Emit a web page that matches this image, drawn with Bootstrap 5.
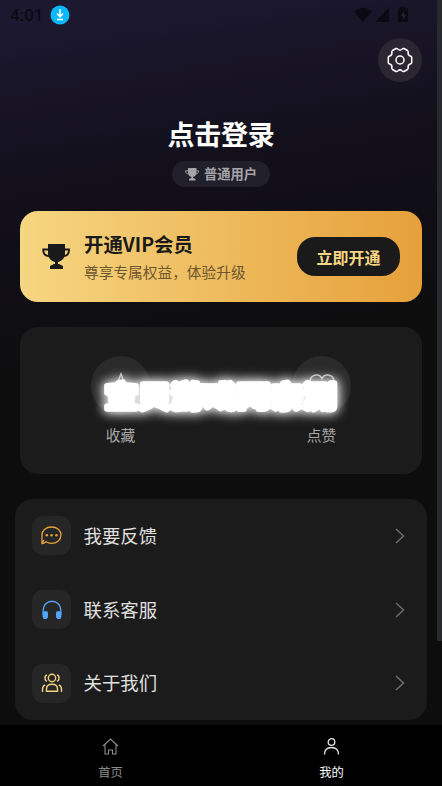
<!DOCTYPE html>
<html lang="zh-CN">
<head>
<meta charset="utf-8">
<meta name="viewport" content="width=device-width, initial-scale=1">
<title>我的</title>
<link href="https://cdn.jsdelivr.net/npm/bootstrap@5.3.0/dist/css/bootstrap.min.css" rel="stylesheet">
<style>
body{font-family:"Noto Sans CJK SC",sans-serif;background:#0d0d0d;overflow:hidden}
.screen{width:442px;height:786px;background:linear-gradient(171deg,#1c182f 3%,#120f1a 24%,#0d0d0d 46%)}
svg{display:block;flex:none}
.status{height:30px;padding:0 33px 0 10px;color:#0b0a12}
.clock{font:500 17px/31px Roboto,sans-serif;width:40px}
.settings{width:44px;height:44px;background:#2a2732;margin:8px 20px 0 auto}
.login{font-size:27px;line-height:40px;margin-top:32px;letter-spacing:-.2px}
.level{width:98px;height:26px;background:#211f29;color:#a5a4a9;font-size:13.3px;font-weight:700;margin-top:7px;gap:5px}
.vip{height:91px;margin:24px 20px 0;border-radius:18px;background:linear-gradient(90deg,#f6d681,#e6a03a);color:#1a1a1a;padding:0 22px}
.vip-text{margin-left:14px}
.vip-title{font-size:19.4px;line-height:28px;margin-top:1px}
.vip-sub{font-size:14.7px;line-height:24px;color:#6c562e;margin-top:2px}
.vip-btn,.vip-btn:hover{width:103px;height:39px;border-radius:18px;background:#1a1a1a;color:#f6d682;font-size:16px;font-weight:700;padding:0;line-height:41px;border:0}
.panel{background:#1b1b1b;border-radius:18px}
.stats{height:147px;margin:25px 20px 0;padding-top:29px}
.stat-icon{width:59px;height:59px;background:#2a2a2a}
.stat-label{font-size:14.7px;line-height:22px;color:#a8a8a8;margin-top:9px}
.menu{height:221px;margin:25px 15px 0}
.menu-row{padding:0 22px 0 17px;color:#e0e0e0;font-size:18.4px}
.tile{width:39px;height:39px;border-radius:11px;background:#262626;margin-right:12.5px}
.tabs{height:61px;background:#000;margin-top:5px;font-size:12.3px;line-height:18px;color:#8b8b8b}
.thumb{width:5px;height:641px;right:0;top:0;background:#26292d}
.stamp{left:74px;top:346px;filter:drop-shadow(0 0 6px #fffc) drop-shadow(0 0 4px #fff9)}
.stamp text{font-size:28px;font-weight:700;fill:#fff;stroke:#fff;stroke-width:5.500px;stroke-linejoin:round}
</style>
<script src="https://cdn.jsdelivr.net/npm/bootstrap@5.3.0/dist/js/bootstrap.bundle.min.js"></script>
</head>
<body>
<svg width="0" height="0" class="position-absolute"><defs>
<symbol id="cup" viewBox="0 0 28 26"><path fill="currentColor" d="M6 0h17v9c0 5-3 8-7 9v2h1l4 2v3H8v-3l4-2h1v-2c-4-1-7-4-7-9z"/><path d="M6 5.500H1.200c0 4 2 6.500 6 6.500M23 5.500h4c0 4-2 6.500-5.500 6.500" fill="none" stroke="currentColor" stroke-width="1.800"/></symbol>
<symbol id="chev" viewBox="0 0 10 16"><path d="M1 1l7.500 7L1 15" fill="none" stroke="#6d6d6d" stroke-width="1.500"/></symbol>
</defs></svg>
<div class="screen position-relative overflow-hidden d-flex flex-column">
  <div class="status d-flex align-items-center">
    <span class="clock">4:01</span>
    <svg width="20" height="20" viewBox="0 0 20 20"><circle cx="10" cy="10" r="9.500" fill="#08b8fb"/><path d="M10 4v8M7 8.500l3 3.300 3-3.300M7 14.500h6" fill="none" stroke="#fff" stroke-width="1.500"/></svg>
    <svg class="ms-auto" width="55" height="18" viewBox="0 0 55 18" fill="currentColor"><path d="M0 5.500Q9-2 18 5.500L9 16zM35 1.500V16H21z"/><path d="M44 2.500h2V.8h5v1.700h3V16H44z"/><path d="M50 5l-3 5h2v4l3-5h-2z" fill="#292536"/></svg>
  </div>
  <div class="settings rounded-circle d-flex align-items-center justify-content-center flex-shrink-0">
    <svg width="26" height="26" viewBox="-13 -13 26 26" fill="none" stroke="#fff" stroke-width="1.500" stroke-linejoin="round"><circle r="4"/><path d="M-4-11.500Q-2.500-11.700-2-10.800Q0-9 2-10.800Q2.500-11.700 4-11.500L7.500-9.500Q8.600-8.700 8.100-7.500Q7.700-4.700 10.400-4Q11.500-3.500 11.700-2.500V2.500Q11.500 3.500 10.400 4Q7.700 4.700 8.100 7.500Q8.600 8.700 7.500 9.500L4 11.500Q2.500 11.700 2 10.800Q0 9-2 10.800Q-2.500 11.700-4 11.500L-7.500 9.500Q-8.600 8.700-8.100 7.500Q-7.700 4.700-10.400 4Q-11.500 3.500-11.700 2.500V-2.500Q-11.500-3.500-10.400-4Q-7.700-4.700-8.100-7.500Q-8.600-8.700-7.500-9.500Z"/></svg>
  </div>
  <div class="login text-white fw-bold text-center">点击登录</div>
  <div class="level rounded-pill mx-auto d-flex align-items-center justify-content-center flex-shrink-0">
    <svg width="14" height="13"><use href="#cup"/></svg><span>普通用户</span>
  </div>
  <section class="vip d-flex align-items-center flex-shrink-0">
    <svg width="28" height="26"><use href="#cup"/></svg>
    <div class="vip-text me-auto">
      <div class="vip-title fw-bold">开通VIP会员</div>
      <div class="vip-sub">尊享专属权益，体验升级</div>
    </div>
    <button class="btn vip-btn">立即开通</button>
  </section>
  <section class="panel stats d-flex flex-shrink-0 text-center">
    <div class="col-6">
      <div class="stat-icon rounded-circle mx-auto d-flex align-items-center justify-content-center"><svg width="28" height="28" viewBox="0 0 28 28" fill="none" stroke="#b5b5b5" stroke-width="1.500"><path d="M14 2l3.300 8.600 8.200.8-6.200 5.400 1.800 8L14 20.600l-7.100 4.200 1.800-8L2.500 11.400l8.200-.8z"/></svg></div>
      <div class="stat-label">收藏</div>
    </div>
    <div class="col-6">
      <div class="stat-icon rounded-circle mx-auto d-flex align-items-center justify-content-center"><svg width="28" height="28" viewBox="0 0 28 28" fill="none" stroke="#b5b5b5" stroke-width="1.500"><path d="M14 6.500C11 .5 2 2.500 2 10c0 6.500 7 11 12 15 5-4 12-8.500 12-15C26 2.500 17 .5 14 6.500z"/></svg></div>
      <div class="stat-label">点赞</div>
    </div>
  </section>
  <section class="panel menu d-flex flex-column flex-shrink-0">
    <div class="menu-row d-flex align-items-center flex-fill">
      <span class="tile d-flex align-items-center justify-content-center"><svg width="21" height="19" viewBox="0 0 21 19"><path d="M1 17.500V9C1 4.300 5 1 10.500 1S20 4.300 20 9s-4 8.300-9.500 8.300c-2.300 0-4-.6-5.500-1.500-1 1-2.300 1.700-4 1.700zM1 17.500l2-3.500" fill="none" stroke="#e6a03a" stroke-width="1.300"/><g fill="#e6a03a"><circle cx="5.800" cy="9.300" r="1.300"/><circle cx="10.600" cy="9.300" r="1.300"/><circle cx="15.500" cy="9.300" r="1.300"/></g></svg></span>
      <span class="me-auto">我要反馈</span><svg width="10" height="16"><use href="#chev"/></svg>
    </div>
    <div class="menu-row d-flex align-items-center flex-fill">
      <span class="tile d-flex align-items-center justify-content-center"><svg width="20" height="20" viewBox="0 0 20 20"><path d="M1.200 15V10a8.800 8.800 0 0 1 17.600 0v5" fill="none" stroke="#55a5fb" stroke-width="1.400"/><path d="M.7 12q5-2.500 5.300 1v3c0 3-2 3.200-4 3Q.7 18.700.7 17zM19.300 12q-5-2.500-5.300 1v3c0 3 2 3.200 4 3q1.300-.3 1.300-2z" fill="#55a5fb"/></svg></span>
      <span class="me-auto">联系客服</span><svg width="10" height="16"><use href="#chev"/></svg>
    </div>
    <div class="menu-row d-flex align-items-center flex-fill">
      <span class="tile d-flex align-items-center justify-content-center"><svg width="22" height="20" viewBox="0 0 22 20" fill="none" stroke="#f1d17d" stroke-width="1.400"><circle cx="11" cy="5" r="3.700"/><path d="M5.500 18.300V16c0-3.200 2.300-4.800 5.500-4.800s5.500 1.600 5.500 4.800v2.300zM6 2C3.300 2.500 3.300 7.500 6 8.200M16 2c2.700.5 2.700 5.500 0 6.200M1.500 19v-2.500c0-2.500.8-4 2.700-4.700M20.500 19v-2.500c0-2.500-.8-4-2.700-4.700"/></svg></span>
      <span class="me-auto">关于我们</span><svg width="10" height="16"><use href="#chev"/></svg>
    </div>
  </section>
  <nav class="tabs d-flex flex-shrink-0 text-center">
    <div class="col-6 pt-2">
      <svg class="mx-auto mt-1 mb-2" width="17" height="18" viewBox="0 0 17 18" fill="none" stroke="#8b8b8b" stroke-width="1.100"><path d="M1 9L8.500 2 16 9M3 7.500V17h3.500v-4h4v4H14V7.500"/></svg>首页
    </div>
    <div class="col-6 pt-2 text-white">
      <svg class="mx-auto mt-1 mb-2" width="17" height="18" viewBox="0 0 17 18" fill="none" stroke="#e5e5e5" stroke-width="1.300"><circle cx="8.500" cy="5" r="3.300"/><path d="M1.500 17.500C1.500 13 4 10.500 8.500 10.500s7 2.500 7 7"/></svg>我的
    </div>
  </nav>
  <div class="thumb position-absolute"></div>
  <svg class="stamp position-absolute" width="296" height="104"><text x="31" y="61" textLength="231" lengthAdjust="spacingAndGlyphs">宝贝游戏网亲测</text></svg>
</div>
</body>
</html>
